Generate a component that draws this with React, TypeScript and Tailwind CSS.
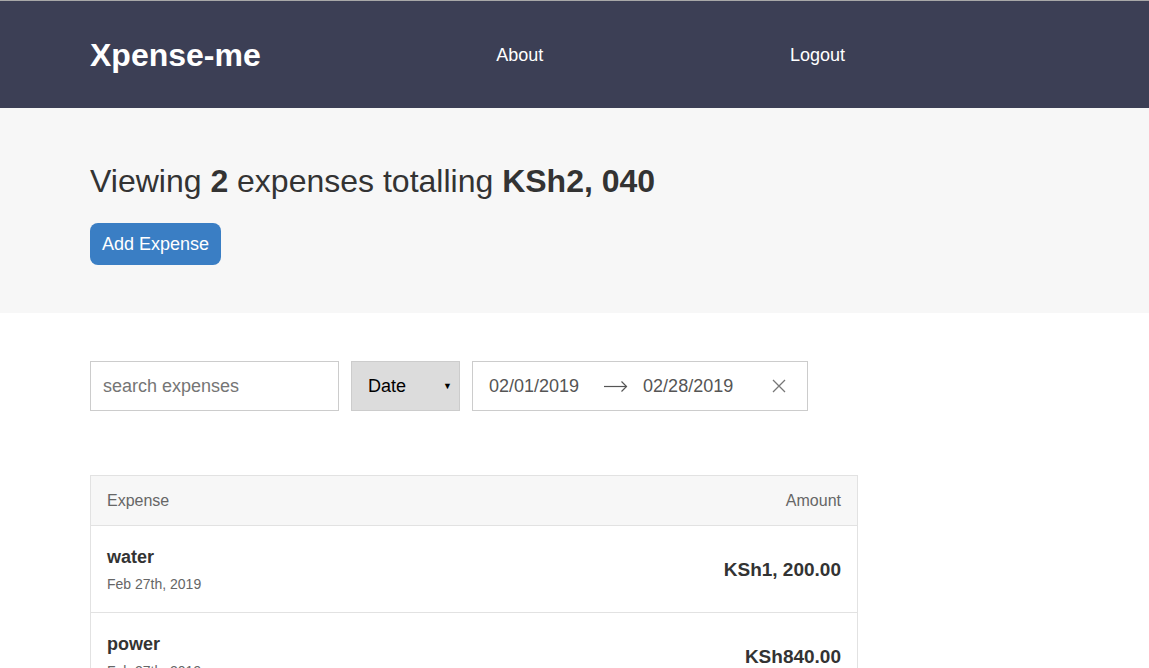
import React from "react";

export default function App() {
  return (
    <div className="min-h-screen bg-white text-[#333333]" style={{ fontFamily: '"Liberation Sans", Arial, sans-serif' }}>
      <header className="border-t border-[#a8a8a8] bg-[#3c3f55]">
        <div className="mx-[90px] flex h-[107px] w-[768px] items-center justify-between">
          <h1 className="text-[32px] font-bold leading-[38px] text-white">Xpense-me</h1>
          <a className="pl-[14px] pr-[12px] text-[18px] leading-[22px] text-white">About</a>
          <a className="px-[13px] text-[18px] leading-[22px] text-white">Logout</a>
        </div>
      </header>

      <section className="bg-[#f7f7f7] px-[90px] pb-[48px] pt-[54px]">
        <h2 className="mb-[23px] text-[32px] font-normal leading-[38px] text-[#333333]">
          Viewing <span className="font-bold">2</span> expenses totalling <span className="font-bold">KSh2, 040</span>
        </h2>
        <button className="h-[42px] rounded-[8px] bg-[#3a7ec4] px-[12px] text-[18px] leading-[22px] text-white">
          Add Expense
        </button>
      </section>

      <section className="px-[90px] pt-[48px]">
        <div className="flex gap-[12px]">
          <div className="flex h-[50px] w-[249px] items-center border border-[#cccccc] bg-white px-[12px]">
            <span className="text-[18px] leading-[22px] text-[#757575]">search expenses</span>
          </div>
          <div className="flex h-[50px] w-[109px] items-center justify-between border border-[#cccccc] bg-[#dcdcdc] pl-[16px] pr-[7px]">
            <span className="text-[18px] leading-[22px] text-black">Date</span>
            <span className="text-[9px] leading-none text-black">▼</span>
          </div>
          <div className="flex h-[50px] w-[336px] items-center border border-[#cccccc] bg-white pl-[16px]">
            <span className="text-[18px] leading-[22px] text-[#555555]">02/01/2019</span>
            <svg className="ml-[25px]" width="24" height="12" viewBox="0 0 24 12" fill="none">
              <path d="M0 6.5H22.5" stroke="#555555" strokeWidth="1.2" />
              <path d="M17.5 1.5L22.5 6.5L17.5 11.5" stroke="#555555" strokeWidth="1.2" />
            </svg>
            <span className="ml-[15px] text-[18px] leading-[22px] text-[#555555]">02/28/2019</span>
            <svg className="ml-[39px]" width="14" height="14" viewBox="0 0 14 14" fill="none">
              <path d="M1 1L13 13M13 1L1 13" stroke="#777777" strokeWidth="1.3" />
            </svg>
          </div>
        </div>

        <div className="mt-[64px] w-[768px] border border-[#e2e2e2]">
          <div className="flex h-[50px] items-center justify-between border-b border-[#e2e2e2] bg-[#f7f7f7] px-[16px] text-[16px] leading-[18px] text-[#666666]">
            <span>Expense</span>
            <span>Amount</span>
          </div>
          {[
            { name: "water", date: "Feb 27th, 2019", amount: "KSh1, 200.00" },
            { name: "power", date: "Feb 27th, 2019", amount: "KSh840.00" },
          ].map((e) => (
            <div key={e.name} className="flex items-center justify-between border-b border-[#e2e2e2] px-[16px] pb-[19px] pt-[20px]">
              <div>
                <div className="text-[18px] font-bold leading-[22px] text-[#333333]">{e.name}</div>
                <div className="mt-[8px] text-[14px] leading-[17px] text-[#666666]">{e.date}</div>
              </div>
              <div className="text-[19px] font-bold leading-[22px] text-[#333333]">{e.amount}</div>
            </div>
          ))}
        </div>
      </section>
    </div>
  );
}
